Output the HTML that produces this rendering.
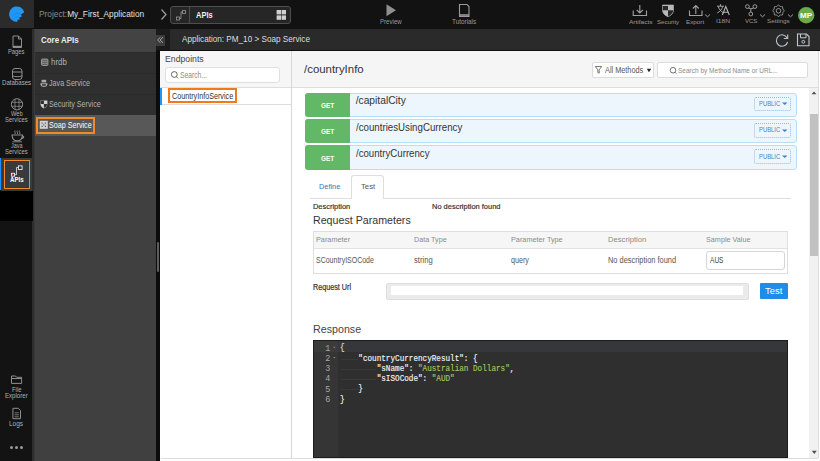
<!DOCTYPE html>
<html><head><meta charset="utf-8">
<style>
*{box-sizing:border-box;margin:0;padding:0}
html,body{width:820px;height:461px;overflow:hidden;background:#3a3a3a;font-family:"Liberation Sans",sans-serif;position:relative}
.a{position:absolute}
.t{position:absolute;white-space:nowrap;line-height:1}
svg{overflow:visible}
</style></head><body>
<div class="a" style="left:0px;top:0px;width:820px;height:29px;background:#121212;"></div>
<div class="a" style="left:0px;top:0px;width:34px;height:28px;background:#2b2b2b;"></div>
<svg class="a" style="left:0px;top:0px;" width="34" height="28" viewBox="0 0 34 28"><path d="M24.2 12.2 A7.7 7.7 0 1 0 17.4 21.8 L17.6 19.8 L19.9 19.4 L19.3 17.4 L21.9 16.4 L21 14.6 Z" fill="#2196f3"/><path d="M21 14.6 C18 12.5 14 13 12.2 16.5 M19.3 17.4 C17 16.3 14.8 17 13.8 19" stroke="#1a80d8" stroke-width="0.6" fill="none"/></svg>
<div class="t" style="left:39.14px;top:9.68px;font-size:9.25px;letter-spacing:0.000px;font-weight:normal;color:#e0e0e0;font-family:'Liberation Sans',sans-serif;transform:scaleX(0.8973);transform-origin:0 0;"><span style="color:#8c8c8c">Project:</span>My_First_Application</div>
<svg class="a" style="left:158px;top:6px;" width="12" height="16" viewBox="0 0 12 16"><path d="M3.5 3.5 L8 8.5 L3.5 13.5" stroke="#9a9a9a" stroke-width="1.3" fill="none"/></svg>
<div class="a" style="left:170px;top:6px;width:121px;height:18px;background:#262626;border:1px solid #4e4e4e;border-radius:3px"></div>
<div class="a" style="left:189px;top:7px;width:1px;height:16px;background:#4e4e4e;"></div>
<svg class="a" style="left:172px;top:7px;" width="17" height="16" viewBox="0 0 17 16"><rect x="4.5" y="10" width="3" height="3" fill="none" stroke="#8a8a8a" stroke-width="0.9"/><rect x="10.5" y="3.5" width="3" height="3" fill="none" stroke="#8a8a8a" stroke-width="0.9"/><path d="M7.5 11.5 L9 11.5 L9 5 L10.5 5" stroke="#8a8a8a" stroke-width="0.9" fill="none"/></svg>
<div class="t" style="left:195.51px;top:10.93px;font-size:8.75px;letter-spacing:0.000px;font-weight:bold;color:#f0f0f0;font-family:'Liberation Sans',sans-serif;transform:scaleX(0.8538);transform-origin:0 0;">APIs</div>
<svg class="a" style="left:276px;top:10px;" width="11" height="10" viewBox="0 0 11 10"><rect x="0.6" y="0" width="4.4" height="4.4" fill="#cfcfcf"/><rect x="5.6" y="0" width="4.4" height="4.4" fill="#cfcfcf"/><rect x="0.6" y="5.4" width="4.4" height="4.4" fill="#cfcfcf"/><rect x="5.6" y="5.4" width="4.4" height="4.4" fill="#cfcfcf"/></svg>
<svg class="a" style="left:384px;top:3px;" width="14" height="15" viewBox="0 0 14 15"><path d="M2.5 1.3 L12 7.2 L2.5 13.2 Z" fill="#8f8f8f"/></svg>
<div class="t" style="left:380.01px;top:18.30px;font-size:7.00px;letter-spacing:0.000px;font-weight:normal;color:#9a9a9a;font-family:'Liberation Sans',sans-serif;transform:scaleX(0.8741);transform-origin:0 0;">Preview</div>
<svg class="a" style="left:456px;top:3px;" width="16" height="16" viewBox="0 0 16 16"><path d="M3.5 1.5 H11 L13 3.5 V13.5 H3.5 Z" fill="none" stroke="#9a9a9a" stroke-width="1.1"/><path d="M3.5 12 H13" stroke="#9a9a9a" stroke-width="1.6"/></svg>
<div class="t" style="left:452.07px;top:18.30px;font-size:7.00px;letter-spacing:0.000px;font-weight:normal;color:#9a9a9a;font-family:'Liberation Sans',sans-serif;transform:scaleX(0.9113);transform-origin:0 0;">Tutorials</div>
<svg class="a" style="left:632px;top:4px;" width="16" height="13" viewBox="0 0 16 13"><path d="M1.2 6.5 V11.5 H14.5 V6.5" fill="none" stroke="#a0a0a0" stroke-width="1.1"/><path d="M7.8 1 V9 M4.8 6 L7.8 9 L10.8 6" fill="none" stroke="#a0a0a0" stroke-width="1.1"/></svg>
<div class="t" style="left:629.00px;top:18.68px;font-size:6.25px;letter-spacing:0.000px;font-weight:normal;color:#9a9a9a;font-family:'Liberation Sans',sans-serif;transform:scaleX(1.0426);transform-origin:0 0;">Artifacts</div>
<svg class="a" style="left:661px;top:4px;" width="14" height="14" viewBox="0 0 14 14"><path d="M1.5 1 H12.5 V6 C12.5 9.5 10 11.5 7 12.7 C4 11.5 1.5 9.5 1.5 6 Z" fill="#b8b8b8" stroke="#b8b8b8" stroke-width="0.6"/><path d="M7 1 V6.2 H1.8 V2 H7 Z" fill="#2a2a2a"/><path d="M7 6.2 H12.3 C12 9.3 9.8 11.3 7 12.5 Z" fill="#2a2a2a"/></svg>
<div class="t" style="left:656.92px;top:18.68px;font-size:6.25px;letter-spacing:0.000px;font-weight:normal;color:#9a9a9a;font-family:'Liberation Sans',sans-serif;transform:scaleX(0.9829);transform-origin:0 0;">Security</div>
<svg class="a" style="left:688px;top:4px;" width="24" height="14" viewBox="0 0 24 14"><path d="M1.5 6.5 V11.5 H14 V6.5" fill="none" stroke="#a0a0a0" stroke-width="1.1"/><path d="M7.8 10 V1.5 M4.8 4.5 L7.8 1.5 L10.8 4.5" fill="none" stroke="#a0a0a0" stroke-width="1.1"/><path d="M17 10.5 L19.5 12.8 L22 10.5" fill="none" stroke="#a0a0a0" stroke-width="1"/></svg>
<div class="t" style="left:686.30px;top:18.68px;font-size:6.25px;letter-spacing:0.000px;font-weight:normal;color:#9a9a9a;font-family:'Liberation Sans',sans-serif;transform:scaleX(1.0049);transform-origin:0 0;">Export</div>
<svg class="a" style="left:714px;top:3px;" width="18" height="14" viewBox="0 0 18 14"><path d="M3 3.2 H10 M6.5 1.2 V3.2 M4.3 3.5 C5 6.5 7 8.5 9.8 10 M8.7 3.5 C8 6.5 6 8.5 3.2 10" fill="none" stroke="#b4b4b4" stroke-width="0.9"/><path d="M8.3 12 L11.8 3.5 L15.3 12 M9.5 9.3 H14.1" fill="none" stroke="#b4b4b4" stroke-width="1.1"/></svg>
<div class="t" style="left:716.40px;top:19.43px;font-size:5.75px;letter-spacing:0.000px;font-weight:normal;color:#9a9a9a;font-family:'Liberation Sans',sans-serif;transform:scaleX(1.1643);transform-origin:0 0;">I18N</div>
<svg class="a" style="left:743px;top:4px;" width="24" height="14" viewBox="0 0 24 14"><circle cx="4.4" cy="2.6" r="1.9" fill="none" stroke="#a8a8a8" stroke-width="0.9"/><circle cx="11.9" cy="2.6" r="1.9" fill="none" stroke="#a8a8a8" stroke-width="0.9"/><circle cx="7.8" cy="10" r="1.9" fill="none" stroke="#a8a8a8" stroke-width="0.9"/><path d="M5.6 4.1 Q7.8 5.6 10.6 4.1 M7.8 5 V8.1" fill="none" stroke="#a8a8a8" stroke-width="0.9"/><path d="M17 10.5 L19.5 12.8 L22 10.5" fill="none" stroke="#a0a0a0" stroke-width="1"/></svg>
<div class="t" style="left:745.17px;top:19.43px;font-size:5.75px;letter-spacing:0.000px;font-weight:normal;color:#9a9a9a;font-family:'Liberation Sans',sans-serif;transform:scaleX(1.0405);transform-origin:0 0;">VCS</div>
<svg class="a" style="left:770px;top:4px;" width="26" height="14" viewBox="0 0 26 14"><circle cx="8.5" cy="6.8" r="2.3" fill="none" stroke="#a0a0a0" stroke-width="0.9"/><path d="M7.68 1.66 Q8.50 0.50 9.32 1.66 Q10.15 2.83 11.55 2.59 Q12.95 2.35 12.71 3.75 Q12.47 5.15 13.64 5.98 Q14.80 6.80 13.64 7.62 Q12.47 8.45 12.71 9.85 Q12.95 11.25 11.55 11.01 Q10.15 10.77 9.32 11.94 Q8.50 13.10 7.68 11.94 Q6.85 10.77 5.45 11.01 Q4.05 11.25 4.29 9.85 Q4.53 8.45 3.36 7.62 Q2.20 6.80 3.36 5.98 Q4.53 5.15 4.29 3.75 Q4.05 2.35 5.45 2.59 Q6.85 2.83 7.68 1.66 Z" fill="none" stroke="#a0a0a0" stroke-width="0.9"/><path d="M18 10.5 L20.5 12.8 L23 10.5" fill="none" stroke="#a0a0a0" stroke-width="1"/></svg>
<div class="t" style="left:767.42px;top:18.55px;font-size:5.50px;letter-spacing:0.000px;font-weight:normal;color:#9a9a9a;font-family:'Liberation Sans',sans-serif;transform:scaleX(1.1417);transform-origin:0 0;">Settings</div>
<svg class="a" style="left:797px;top:6px;" width="18" height="18" viewBox="0 0 18 18"><circle cx="9.2" cy="9.2" r="8.2" fill="#6aaa4a"/></svg>
<div class="t" style="left:799.97px;top:11.93px;font-size:7.75px;letter-spacing:0.000px;font-weight:bold;color:#fff;font-family:'Liberation Sans',sans-serif;transform:scaleX(1.0470);transform-origin:0 0;">MP</div>
<div class="a" style="left:0px;top:29px;width:32px;height:432px;background:#131313;"></div>
<div class="a" style="left:32px;top:29px;width:1.8px;height:432px;background:#2e2e2e;"></div>
<svg class="a" style="left:10px;top:35px;" width="14" height="14" viewBox="0 0 14 14"><path d="M3 1 H8.5 L11.5 4 V12.5 H3 Z M8.5 1 V4 H11.5" fill="none" stroke="#8e8e8e" stroke-width="1"/><path d="M3 11.5 H11.5" stroke="#8e8e8e" stroke-width="1.4"/></svg>
<div class="t" style="left:8.44px;top:48.30px;font-size:7.00px;letter-spacing:0.000px;font-weight:normal;color:#b0b0b0;font-family:'Liberation Sans',sans-serif;transform:scaleX(0.8294);transform-origin:0 0;">Pages</div>
<svg class="a" style="left:10px;top:67px;" width="14" height="14" viewBox="0 0 14 14"><rect x="2.5" y="1.5" width="9.5" height="11" rx="2.5" fill="none" stroke="#8e8e8e" stroke-width="1"/><path d="M2.5 5 H12 M2.5 8.8 C5 10 9.5 10 12 8.8" fill="none" stroke="#8e8e8e" stroke-width="1"/></svg>
<div class="t" style="left:2.11px;top:79.30px;font-size:7.00px;letter-spacing:0.000px;font-weight:normal;color:#b0b0b0;font-family:'Liberation Sans',sans-serif;transform:scaleX(0.8696);transform-origin:0 0;">Databases</div>
<svg class="a" style="left:10px;top:97px;" width="14" height="14" viewBox="0 0 14 14"><circle cx="7" cy="7.3" r="5.6" fill="none" stroke="#8e8e8e" stroke-width="1"/><path d="M1.5 5.3 H12.5 M1.5 9.3 H12.5 M5 1.9 V12.7 M9 1.9 V12.7" stroke="#8e8e8e" stroke-width="0.8" fill="none"/></svg>
<div class="t" style="left:11.47px;top:110.30px;font-size:7.00px;letter-spacing:0.000px;font-weight:normal;color:#b0b0b0;font-family:'Liberation Sans',sans-serif;transform:scaleX(0.8175);transform-origin:0 0;">Web</div>
<div class="t" style="left:5.33px;top:116.30px;font-size:7.00px;letter-spacing:0.000px;font-weight:normal;color:#b0b0b0;font-family:'Liberation Sans',sans-serif;transform:scaleX(0.8445);transform-origin:0 0;">Services</div>
<svg class="a" style="left:10px;top:129px;" width="16" height="14" viewBox="0 0 16 14"><path d="M5 1.5 C4 2.5 6 3.5 5 5 M7.3 1.5 C6.3 2.5 8.3 3.5 7.3 5 M9.6 1.5 C8.6 2.5 10.6 3.5 9.6 5" stroke="#8e8e8e" stroke-width="0.9" fill="none"/><path d="M2 6 H12.5 C12.3 9.8 10 11.8 7.2 11.8 C4.4 11.8 2.2 9.8 2 6 Z M12.3 7 C14.2 7 14.2 9.5 11.6 9.6" fill="none" stroke="#8e8e8e" stroke-width="1.1"/><path d="M2.5 12.8 H12" stroke="#8e8e8e" stroke-width="0.9"/></svg>
<div class="t" style="left:11.42px;top:142.30px;font-size:7.00px;letter-spacing:0.000px;font-weight:normal;color:#b0b0b0;font-family:'Liberation Sans',sans-serif;transform:scaleX(0.7768);transform-origin:0 0;">Java</div>
<div class="t" style="left:5.33px;top:148.30px;font-size:7.00px;letter-spacing:0.000px;font-weight:normal;color:#b0b0b0;font-family:'Liberation Sans',sans-serif;transform:scaleX(0.8445);transform-origin:0 0;">Services</div>
<div class="a" style="left:1px;top:158px;width:31px;height:32.5px;background:#3a3a3a;"></div>
<div class="a" style="left:0px;top:158px;width:1.2px;height:32.3px;background:#1e90ff;"></div>
<div class="a" style="left:3.9px;top:159.5px;width:26.3px;height:29.5px;background:transparent;border:1.8px solid #f28a2a;box-shadow:inset 0 0 0 1px #2c3a48"></div>
<svg class="a" style="left:0px;top:0px;" width="34" height="190" viewBox="0 0 34 190"><rect x="18.4" y="165.9" width="3.7" height="3.5" fill="#2a2a2a" stroke="#f0f0f0" stroke-width="0.9"/><rect x="11.4" y="173.3" width="3.2" height="2.9" fill="#3a3a3a" stroke="#f0f0f0" stroke-width="0.9"/><rect x="11.9" y="173.9" width="1.2" height="1.6" fill="#e04030"/><path d="M14.6 174.7 H16.5 V167.5 H18.4" fill="none" stroke="#e8e8e8" stroke-width="0.8"/></svg>
<div class="t" style="left:9.95px;top:176.30px;font-size:7.00px;letter-spacing:0.000px;font-weight:bold;color:#fff;font-family:'Liberation Sans',sans-serif;transform:scaleX(0.8817);transform-origin:0 0;">APIs</div>
<div class="a" style="left:0px;top:190.5px;width:32.9px;height:30.2px;background:#000;"></div>
<svg class="a" style="left:10px;top:374px;" width="14" height="11" viewBox="0 0 14 11"><path d="M1.5 2 H5.5 L6.7 3.3 H11.6 V9.4 H1.5 Z M1.5 4.5 H11.6" fill="none" stroke="#8e8e8e" stroke-width="1"/></svg>
<div class="t" style="left:11.53px;top:386.30px;font-size:7.00px;letter-spacing:0.000px;font-weight:normal;color:#b0b0b0;font-family:'Liberation Sans',sans-serif;transform:scaleX(0.8436);transform-origin:0 0;">File</div>
<div class="t" style="left:5.41px;top:392.30px;font-size:7.00px;letter-spacing:0.000px;font-weight:normal;color:#b0b0b0;font-family:'Liberation Sans',sans-serif;transform:scaleX(0.8693);transform-origin:0 0;">Explorer</div>
<svg class="a" style="left:10px;top:406px;" width="14" height="14" viewBox="0 0 14 14"><path d="M2.9 2.3 H8.3 L10.5 4.5 V12.7 H2.9 Z" fill="none" stroke="#8e8e8e" stroke-width="1"/><path d="M4.6 6.8 H8.8 M4.6 8.8 H8.8 M4.6 10.8 H8.8" stroke="#8e8e8e" stroke-width="0.8"/></svg>
<div class="t" style="left:9.28px;top:420.30px;font-size:7.00px;letter-spacing:0.000px;font-weight:normal;color:#b0b0b0;font-family:'Liberation Sans',sans-serif;transform:scaleX(0.9310);transform-origin:0 0;">Logs</div>
<svg class="a" style="left:9px;top:444px;" width="16" height="7" viewBox="0 0 16 7"><circle cx="2.5" cy="3.5" r="1.5" fill="#9a9a9a"/><circle cx="7.5" cy="3.5" r="1.5" fill="#9a9a9a"/><circle cx="12.5" cy="3.5" r="1.5" fill="#9a9a9a"/></svg>
<div class="a" style="left:34.5px;top:29px;width:121.5px;height:432px;background:#404040;"></div>
<div class="a" style="left:34.5px;top:29px;width:121.5px;height:23px;background:#434343;"></div>
<div class="t" style="left:41.38px;top:36.67px;font-size:8.25px;letter-spacing:0.000px;font-weight:bold;color:#ececec;font-family:'Liberation Sans',sans-serif;transform:scaleX(0.9624);transform-origin:0 0;">Core APIs</div>
<div class="a" style="left:34.5px;top:52px;width:121.5px;height:62.7px;background:#2f2f2f;"></div>
<div class="a" style="left:34.5px;top:51.5px;width:121.5px;height:1px;background:#2a2a2a;"></div>
<div class="a" style="left:34.5px;top:72.5px;width:121.5px;height:1px;background:#2a2a2a;"></div>
<div class="a" style="left:34.5px;top:93.5px;width:121.5px;height:1px;background:#2a2a2a;"></div>
<div class="a" style="left:34.5px;top:114.5px;width:121.5px;height:21.5px;background:#585858;"></div>
<svg class="a" style="left:40px;top:57px;" width="10" height="10" viewBox="0 0 10 10"><rect x="1.6" y="2.1" width="6.3" height="6.3" rx="0.8" fill="#5a5a5a" stroke="#a0a0a0" stroke-width="1"/><path d="M2 4.2 H7.5 M2 6.3 H7.5" stroke="#9a9a9a" stroke-width="0.8"/></svg>
<div class="t" style="left:50.85px;top:57.92px;font-size:8.75px;letter-spacing:0.000px;font-weight:normal;color:#b2b2b2;font-family:'Liberation Sans',sans-serif;transform:scaleX(0.9009);transform-origin:0 0;">hrdb</div>
<svg class="a" style="left:39px;top:78px;" width="10" height="10" viewBox="0 0 10 10"><rect x="2.6" y="1.8" width="4.6" height="2.6" fill="#a8a8a8"/><path d="M1.3 5.2 H8.5 C8.5 7.8 7 8.8 4.9 8.8 C2.8 8.8 1.3 7.8 1.3 5.2 Z" fill="#b0b0b0"/><rect x="3" y="6.2" width="3.8" height="1.5" fill="#2e2e2e"/></svg>
<div class="t" style="left:49.09px;top:78.80px;font-size:9.00px;letter-spacing:0.000px;font-weight:normal;color:#b2b2b2;font-family:'Liberation Sans',sans-serif;transform:scaleX(0.7955);transform-origin:0 0;">Java Service</div>
<svg class="a" style="left:40px;top:100px;" width="8" height="9" viewBox="0 0 8 9"><path d="M0.4 0.5 H7.4 V3.8 C7.4 6.2 5.8 7.6 3.9 8.4 C2 7.6 0.4 6.2 0.4 3.8 Z" fill="#d0d0d0"/><path d="M3.9 0.5 V4 H0.6 V0.7 Z M3.9 4 H7.3 C7.1 6 5.6 7.3 3.9 8.1 Z" fill="#2e2e2e"/></svg>
<div class="t" style="left:48.88px;top:100.67px;font-size:8.25px;letter-spacing:0.000px;font-weight:normal;color:#b2b2b2;font-family:'Liberation Sans',sans-serif;transform:scaleX(0.8674);transform-origin:0 0;">Security Service</div>
<div class="a" style="left:35.9px;top:117px;width:59.1px;height:17px;background:transparent;border:2px solid #f28a2a"></div>
<svg class="a" style="left:39px;top:120px;" width="10" height="10" viewBox="0 0 10 10"><rect x="0.8" y="0.8" width="8" height="8" fill="#d4d4d4"/><path d="M2.5 2.5 h1.3 v1.3 h-1.3 Z M5.8 2.5 h1.3 v1.3 h-1.3 Z M2.5 5.8 h1.3 v1.3 h-1.3 Z M5.8 5.8 h1.3 v1.3 h-1.3 Z M4.2 4.2 h1.2 v1.2 h-1.2 Z" fill="#606060"/></svg>
<div class="t" style="left:48.88px;top:120.93px;font-size:8.75px;letter-spacing:0.000px;font-weight:normal;color:#ffffff;font-family:'Liberation Sans',sans-serif;transform:scaleX(0.8191);transform-origin:0 0;">Soap Service</div>
<div class="a" style="left:156px;top:29px;width:14px;height:22px;background:#1b1b1b;"></div>
<div class="a" style="left:156px;top:51px;width:4px;height:410px;background:#0c0c0c;"></div>
<div class="a" style="left:156px;top:35px;width:9px;height:11px;background:#3b3b3b;"></div>
<svg class="a" style="left:156px;top:35px;" width="9" height="11" viewBox="0 0 9 11"><path d="M4.5 2.2 L1.6 5 L4.5 7.8 M7 2.2 L4.1 5 L7 7.8" fill="none" stroke="#b8c0c8" stroke-width="0.8"/></svg>
<div class="a" style="left:157px;top:242px;width:2.4px;height:30px;background:#5e5e5e;border-radius:1px"></div>
<div class="a" style="left:170px;top:29px;width:650px;height:21px;background:#2a2a2a;"></div>
<div class="a" style="left:156px;top:50px;width:664px;height:1px;background:#0e0e0e;"></div>
<div class="t" style="left:182.40px;top:34.05px;font-size:9.50px;letter-spacing:0.000px;font-weight:normal;color:#dedede;font-family:'Liberation Sans',sans-serif;transform:scaleX(0.8574);transform-origin:0 0;">Application: PM_10 &gt; Soap Service</div>
<svg class="a" style="left:774px;top:32px;" width="16" height="16" viewBox="0 0 16 16"><path d="M13.2 6 A5.7 5.7 0 1 0 13.6 10" fill="none" stroke="#b8c4cc" stroke-width="1.1"/><path d="M13.7 2.5 V6.5 H9.8" fill="none" stroke="#b8c4cc" stroke-width="1.1"/></svg>
<svg class="a" style="left:795px;top:32px;" width="16" height="16" viewBox="0 0 16 16"><path d="M2.5 2 H11.5 L14 4.5 V13.8 H2.5 Z" fill="none" stroke="#c0c8cc" stroke-width="1.1"/><path d="M5.5 2 V5.8 H11 V2" fill="none" stroke="#c0c8cc" stroke-width="1"/><circle cx="8.3" cy="9.8" r="1.4" fill="none" stroke="#c0c8cc" stroke-width="1"/></svg>
<div class="a" style="left:160px;top:51px;width:660px;height:410px;background:#ffffff;"></div>
<div class="a" style="left:161px;top:458px;width:657px;height:1px;background:#dcdcdc;"></div>
<div class="a" style="left:818px;top:51px;width:1px;height:407px;background:#dcdcdc;"></div>
<div class="a" style="left:160px;top:51px;width:131.3px;height:36px;background:#f6f6f6;"></div>
<div class="a" style="left:160px;top:86.8px;width:131.3px;height:1px;background:#dedede;"></div>
<div class="a" style="left:291px;top:51px;width:1px;height:407px;background:#d8d8d8;"></div>
<div class="t" style="left:164.70px;top:55.05px;font-size:8.50px;letter-spacing:0.000px;font-weight:normal;color:#454545;font-family:'Liberation Sans',sans-serif;transform:scaleX(1.0230);transform-origin:0 0;">Endpoints</div>
<div class="a" style="left:165.4px;top:66.9px;width:114.8px;height:16.5px;background:#fff;border:1px solid #e0e0e0;border-radius:3px"></div>
<svg class="a" style="left:170px;top:69px;" width="10" height="12" viewBox="0 0 10 12"><circle cx="4.3" cy="5.5" r="2.9" fill="none" stroke="#555" stroke-width="0.9"/><path d="M6.3 7.6 L8 9.3" stroke="#555" stroke-width="0.9"/></svg>
<div class="t" style="left:180.10px;top:71.67px;font-size:8.25px;letter-spacing:0.000px;font-weight:normal;color:#8a8a8a;font-family:'Liberation Sans',sans-serif;transform:scaleX(0.8140);transform-origin:0 0;">Search...</div>
<div class="a" style="left:160px;top:104px;width:131.3px;height:1px;background:#dcdcdc;"></div>
<div class="a" style="left:160px;top:87.7px;width:1.8px;height:16.9px;background:#2196f3;"></div>
<div class="a" style="left:167.6px;top:88px;width:69px;height:14.9px;background:transparent;border:2px solid #f07a1a"></div>
<div class="t" style="left:171.54px;top:91.67px;font-size:9.25px;letter-spacing:0.000px;font-weight:normal;color:#333;font-family:'Liberation Sans',sans-serif;transform:scaleX(0.7772);transform-origin:0 0;">CountryInfoService</div>
<div class="a" style="left:292px;top:51px;width:526px;height:36px;background:#f5f5f5;"></div>
<div class="a" style="left:292px;top:87px;width:526px;height:1px;background:#dedede;"></div>
<div class="t" style="left:304.30px;top:64.05px;font-size:10.50px;letter-spacing:0.000px;font-weight:normal;color:#333;font-family:'Liberation Sans',sans-serif;transform:scaleX(1.0872);transform-origin:0 0;">/countryInfo</div>
<div class="a" style="left:592.3px;top:62.4px;width:61.8px;height:15.8px;background:#fff;border:1px solid #dcdcdc;border-radius:2px"></div>
<svg class="a" style="left:594px;top:64px;" width="9" height="12" viewBox="0 0 9 12"><path d="M1.3 2.5 H7.7 L5.2 5.8 V9.2 L3.8 8.5 V5.8 Z" fill="none" stroke="#555" stroke-width="0.8"/></svg>
<div class="t" style="left:604.80px;top:66.05px;font-size:8.50px;letter-spacing:0.000px;font-weight:normal;color:#555;font-family:'Liberation Sans',sans-serif;transform:scaleX(0.8612);transform-origin:0 0;">All Methods</div>
<svg class="a" style="left:645px;top:66px;" width="8" height="8" viewBox="0 0 8 8"><path d="M1.8 2.8 H6.2 L4 6.2 Z" fill="#222"/></svg>
<div class="a" style="left:657.4px;top:62.4px;width:150.2px;height:16.1px;background:#fff;border:1px solid #dcdcdc;border-radius:2px"></div>
<svg class="a" style="left:668px;top:64px;" width="11" height="12" viewBox="0 0 11 12"><circle cx="5" cy="6.2" r="2.8" fill="none" stroke="#555" stroke-width="0.8"/><path d="M7 8.2 L8.4 9.6" stroke="#555" stroke-width="0.8"/></svg>
<div class="t" style="left:678.41px;top:67.05px;font-size:7.50px;letter-spacing:0.000px;font-weight:normal;color:#8a8a8a;font-family:'Liberation Sans',sans-serif;transform:scaleX(0.8672);transform-origin:0 0;">Search by Method Name or URL...</div>
<div class="a" style="left:809px;top:88px;width:9px;height:370px;background:#f1f1f1;"></div>
<div class="a" style="left:810.3px;top:114.3px;width:7.6px;height:141.7px;background:#c1c1c1;"></div>
<svg class="a" style="left:810px;top:89px;" width="8" height="8" viewBox="0 0 8 8"><path d="M1.5 5.3 L4 2.5 L6.5 5.3 Z" fill="#505050"/></svg>
<svg class="a" style="left:810px;top:449px;" width="8" height="7" viewBox="0 0 8 7"><path d="M1.8 1.8 L4.3 4.9 L6.8 1.8 Z" fill="#505050"/></svg>
<div class="a" style="left:304.8px;top:92.6px;width:492px;height:24.2px;background:#eef6fd;border:1px solid #b8ddf7;border-radius:3px"></div>
<div class="a" style="left:304.8px;top:92.6px;width:45.2px;height:24.2px;background:#62b866;border-radius:3px 0 0 3px"></div>
<div class="t" style="left:320.74px;top:101.80px;font-size:8.00px;letter-spacing:0.000px;font-weight:bold;color:#fff;font-family:'Liberation Sans',sans-serif;transform:scaleX(0.8101);transform-origin:0 0;">GET</div>
<div class="t" style="left:355.70px;top:95.67px;font-size:10.25px;letter-spacing:0.000px;font-weight:normal;color:#333;font-family:'Liberation Sans',sans-serif;">/capitalCity</div>
<div class="a" style="left:754px;top:96.6px;width:37px;height:14.5px;background:#eef6fd;border:1px dotted #8fbde6;border-radius:2px"></div>
<div class="t" style="left:759.03px;top:100.17px;font-size:7.25px;letter-spacing:0.000px;font-weight:normal;color:#4a82c0;font-family:'Liberation Sans',sans-serif;transform:scaleX(0.8086);transform-origin:0 0;">PUBLIC</div>
<svg class="a" style="left:781px;top:100.1px;" width="8" height="8" viewBox="0 0 8 8"><path d="M1 2.5 H6.5 L3.75 5 Z" fill="#3a7fd0"/></svg>
<div class="a" style="left:304.8px;top:119px;width:492px;height:24.2px;background:#eef6fd;border:1px solid #b8ddf7;border-radius:3px"></div>
<div class="a" style="left:304.8px;top:119px;width:45.2px;height:24.2px;background:#62b866;border-radius:3px 0 0 3px"></div>
<div class="t" style="left:320.74px;top:127.80px;font-size:8.00px;letter-spacing:0.000px;font-weight:bold;color:#fff;font-family:'Liberation Sans',sans-serif;transform:scaleX(0.8101);transform-origin:0 0;">GET</div>
<div class="t" style="left:355.70px;top:122.68px;font-size:10.25px;letter-spacing:0.000px;font-weight:normal;color:#333;font-family:'Liberation Sans',sans-serif;transform:scaleX(0.9470);transform-origin:0 0;">/countriesUsingCurrency</div>
<div class="a" style="left:754px;top:123px;width:37px;height:14.5px;background:#eef6fd;border:1px dotted #8fbde6;border-radius:2px"></div>
<div class="t" style="left:759.03px;top:126.18px;font-size:7.25px;letter-spacing:0.000px;font-weight:normal;color:#4a82c0;font-family:'Liberation Sans',sans-serif;transform:scaleX(0.8086);transform-origin:0 0;">PUBLIC</div>
<svg class="a" style="left:781px;top:126.5px;" width="8" height="8" viewBox="0 0 8 8"><path d="M1 2.5 H6.5 L3.75 5 Z" fill="#3a7fd0"/></svg>
<div class="a" style="left:304.8px;top:145.4px;width:492px;height:24.2px;background:#eef6fd;border:1px solid #b8ddf7;border-radius:3px"></div>
<div class="a" style="left:304.8px;top:145.4px;width:45.2px;height:24.2px;background:#62b866;border-radius:3px 0 0 3px"></div>
<div class="t" style="left:320.74px;top:154.80px;font-size:8.00px;letter-spacing:0.000px;font-weight:bold;color:#fff;font-family:'Liberation Sans',sans-serif;transform:scaleX(0.8101);transform-origin:0 0;">GET</div>
<div class="t" style="left:355.70px;top:148.68px;font-size:10.25px;letter-spacing:0.000px;font-weight:normal;color:#333;font-family:'Liberation Sans',sans-serif;transform:scaleX(0.9416);transform-origin:0 0;">/countryCurrency</div>
<div class="a" style="left:754px;top:149.4px;width:37px;height:14.5px;background:#eef6fd;border:1px dotted #8fbde6;border-radius:2px"></div>
<div class="t" style="left:759.03px;top:153.18px;font-size:7.25px;letter-spacing:0.000px;font-weight:normal;color:#4a82c0;font-family:'Liberation Sans',sans-serif;transform:scaleX(0.8086);transform-origin:0 0;">PUBLIC</div>
<svg class="a" style="left:781px;top:152.9px;" width="8" height="8" viewBox="0 0 8 8"><path d="M1 2.5 H6.5 L3.75 5 Z" fill="#3a7fd0"/></svg>
<div class="a" style="left:310px;top:198px;width:481px;height:1px;background:#dedede;"></div>
<div class="a" style="left:351.2px;top:175.2px;width:32.5px;height:23.4px;background:#fff;border:1px solid #dedede;border-bottom:none;border-radius:3px 3px 0 0"></div>
<div class="t" style="left:319.21px;top:182.80px;font-size:8.00px;letter-spacing:0.000px;font-weight:normal;color:#3579b8;font-family:'Liberation Sans',sans-serif;transform:scaleX(0.9206);transform-origin:0 0;">Define</div>
<div class="t" style="left:360.55px;top:182.80px;font-size:8.00px;letter-spacing:0.000px;font-weight:normal;color:#555;font-family:'Liberation Sans',sans-serif;transform:scaleX(0.9626);transform-origin:0 0;">Test</div>
<div class="t" style="left:313.31px;top:202.80px;font-size:8.00px;letter-spacing:0.000px;font-weight:normal;color:#333;font-family:'Liberation Sans',sans-serif;transform:scaleX(0.9285);transform-origin:0 0;-webkit-text-stroke:0.2px #333;">Description</div>
<div class="t" style="left:431.80px;top:202.80px;font-size:8.00px;letter-spacing:0.000px;font-weight:normal;color:#333;font-family:'Liberation Sans',sans-serif;transform:scaleX(0.9329);transform-origin:0 0;-webkit-text-stroke:0.2px #333;">No description found</div>
<div class="t" style="left:313.15px;top:215.05px;font-size:10.50px;letter-spacing:0.000px;font-weight:normal;color:#333;font-family:'Liberation Sans',sans-serif;transform:scaleX(1.0150);transform-origin:0 0;">Request Parameters</div>
<div class="a" style="left:313px;top:231px;width:475px;height:42.5px;background:#fff;border:1px solid #dedede"></div>
<div class="a" style="left:314px;top:232px;width:473px;height:16px;background:#f6f6f6;"></div>
<div class="a" style="left:314px;top:248px;width:473px;height:1px;background:#e2e2e2;"></div>
<div class="t" style="left:316.22px;top:235.80px;font-size:8.00px;letter-spacing:0.000px;font-weight:normal;color:#8a8a8a;font-family:'Liberation Sans',sans-serif;transform:scaleX(0.9123);transform-origin:0 0;">Parameter</div>
<div class="t" style="left:413.92px;top:235.80px;font-size:8.00px;letter-spacing:0.000px;font-weight:normal;color:#8a8a8a;font-family:'Liberation Sans',sans-serif;transform:scaleX(0.8991);transform-origin:0 0;">Data Type</div>
<div class="t" style="left:510.92px;top:235.80px;font-size:8.00px;letter-spacing:0.000px;font-weight:normal;color:#8a8a8a;font-family:'Liberation Sans',sans-serif;transform:scaleX(0.9102);transform-origin:0 0;">Parameter Type</div>
<div class="t" style="left:608.09px;top:235.80px;font-size:8.00px;letter-spacing:0.000px;font-weight:normal;color:#8a8a8a;font-family:'Liberation Sans',sans-serif;transform:scaleX(0.9568);transform-origin:0 0;">Description</div>
<div class="t" style="left:706.47px;top:235.80px;font-size:8.00px;letter-spacing:0.000px;font-weight:normal;color:#8a8a8a;font-family:'Liberation Sans',sans-serif;transform:scaleX(0.9047);transform-origin:0 0;">Sample Value</div>
<div class="t" style="left:316.49px;top:256.05px;font-size:8.50px;letter-spacing:0.000px;font-weight:normal;color:#555;font-family:'Liberation Sans',sans-serif;transform:scaleX(0.8225);transform-origin:0 0;">SCountryISOCode</div>
<div class="t" style="left:414.31px;top:256.05px;font-size:8.50px;letter-spacing:0.000px;font-weight:normal;color:#555;font-family:'Liberation Sans',sans-serif;transform:scaleX(0.8968);transform-origin:0 0;">string</div>
<div class="t" style="left:511.21px;top:256.05px;font-size:8.50px;letter-spacing:0.000px;font-weight:normal;color:#555;font-family:'Liberation Sans',sans-serif;transform:scaleX(0.8416);transform-origin:0 0;">query</div>
<div class="t" style="left:608.11px;top:256.05px;font-size:8.50px;letter-spacing:0.000px;font-weight:normal;color:#555;font-family:'Liberation Sans',sans-serif;transform:scaleX(0.8729);transform-origin:0 0;">No description found</div>
<div class="a" style="left:706.4px;top:251.4px;width:78.5px;height:18.3px;background:#fff;border:1px solid #d6d6d6;border-radius:3px"></div>
<div class="t" style="left:710.10px;top:256.05px;font-size:8.50px;letter-spacing:0.000px;font-weight:normal;color:#444;font-family:'Liberation Sans',sans-serif;transform:scaleX(0.7723);transform-origin:0 0;">AUS</div>
<div class="t" style="left:312.92px;top:283.68px;font-size:8.25px;letter-spacing:0.000px;font-weight:normal;color:#333;font-family:'Liberation Sans',sans-serif;transform:scaleX(0.8733);transform-origin:0 0;-webkit-text-stroke:0.2px #333;">Request Url</div>
<div class="a" style="left:386.3px;top:282.8px;width:362.5px;height:17px;background:#ebebeb;border:1px solid #dedede;border-radius:2px"></div>
<div class="a" style="left:390.7px;top:285.8px;width:352.1px;height:9.3px;background:#ffffff;"></div>
<div class="a" style="left:760.1px;top:282.7px;width:27.8px;height:16.5px;background:#1e8ce8;border-radius:1px"></div>
<div class="t" style="left:765.31px;top:287.05px;font-size:8.50px;letter-spacing:0.000px;font-weight:normal;color:#fff;font-family:'Liberation Sans',sans-serif;transform:scaleX(1.1077);transform-origin:0 0;">Test</div>
<div class="t" style="left:313.05px;top:323.93px;font-size:10.75px;letter-spacing:0.000px;font-weight:normal;color:#444;font-family:'Liberation Sans',sans-serif;transform:scaleX(0.9936);transform-origin:0 0;">Response</div>
<div class="a" style="left:313.2px;top:339.8px;width:474.8px;height:118px;background:#2f2f2f;border:1px solid #1c1c1c"></div>
<div class="a" style="left:314.2px;top:340.8px;width:24px;height:116px;background:#353535;"></div>
<div class="a" style="left:338.2px;top:340.8px;width:448.8px;height:11.6px;background:#35373a;"></div>
<div class="a" style="left:314.2px;top:340.8px;width:24px;height:11.6px;background:#3b3b3b;"></div>
<div class="a" style="left:340.8px;top:358.5px;width:16.9px;height:1px;background:transparent;border-top:1px solid #393939"></div>
<div class="a" style="left:340.8px;top:368.76px;width:35.3px;height:1px;background:transparent;border-top:1px solid #393939"></div>
<div class="a" style="left:340.8px;top:379.02px;width:35.3px;height:1px;background:transparent;border-top:1px solid #393939"></div>
<div class="a" style="left:340.8px;top:389.28px;width:16.9px;height:1px;background:transparent;border-top:1px solid #393939"></div>
<div class="a" id="code" style="left:340.4px;top:343.3px;font-family:'Liberation Mono',monospace;font-size:8.4px;line-height:10.26px;white-space:pre;color:#f4f4f4;transform:scaleX(0.9127);transform-origin:0 0;-webkit-text-stroke:0.15px #f4f4f4"><span style="color:#d0d0d0">{</span>
    "countryCurrencyResult": {
        "sName": <span style="color:#a2c860;-webkit-text-stroke:0.15px #a2c860">"Australian Dollars"</span>,
        "sISOCode": <span style="color:#a2c860;-webkit-text-stroke:0.15px #a2c860">"AUD"</span>
    }
}</div>
<div class="a" style="left:316px;top:343.6px;width:14.2px;text-align:right;font-family:'Liberation Mono',monospace;font-size:8.4px;line-height:10.26px;white-space:pre;color:#a8a8a8">1
2
3
4
5
6</div>
<svg class="a" style="left:331px;top:343px;" width="6" height="20" viewBox="0 0 6 20"><path d="M1.8 3.8 H4.8 L3.3 5.3 Z M1.8 14 H4.8 L3.3 15.5 Z" fill="#777"/></svg>
</body></html>
